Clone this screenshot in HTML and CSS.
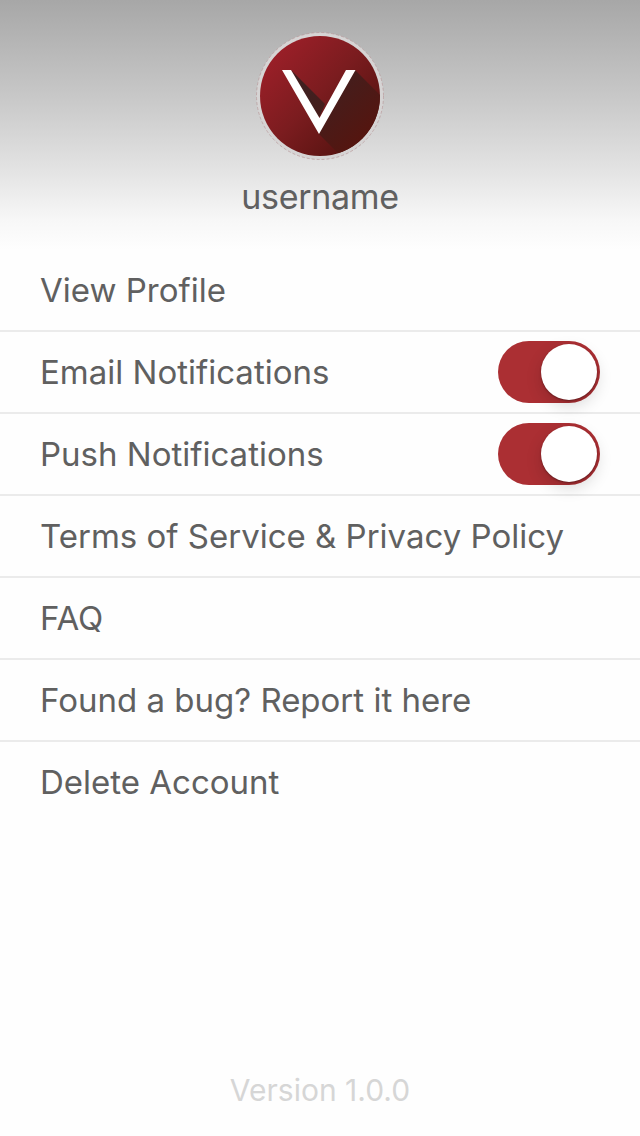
FILE: index.html
```html
<!DOCTYPE html>
<html lang="en">
<head>
<meta charset="utf-8">
<title>Settings</title>
<link rel="stylesheet" href="styles.css">
</head>
<body>
<main class="screen">
  <header class="profile">
    <svg class="avatar" viewBox="0 0 128 128" aria-hidden="true">
      <defs>
        <linearGradient id="disc" x1="0.1" y1="0.15" x2="0.85" y2="0.85">
          <stop offset="0" stop-color="#9b1f28"/>
          <stop offset="0.5" stop-color="#7b1c1f"/>
          <stop offset="1" stop-color="#561310"/>
        </linearGradient>
        <linearGradient id="fade" gradientUnits="userSpaceOnUse" x1="60" y1="55" x2="110" y2="105">
          <stop offset="0" stop-color="#402020"/>
          <stop offset="1" stop-color="#55150f"/>
        </linearGradient>
        <clipPath id="clip"><circle cx="64" cy="64" r="60"/></clipPath>
      </defs>
      <circle cx="64" cy="64" r="63.5" fill="#d6d4d4" stroke="#b99a9b" stroke-width="0.7" stroke-dasharray="3 2"/>
      <circle cx="64" cy="64" r="60" fill="url(#disc)"/>
      <g clip-path="url(#clip)" fill="url(#fade)">
        <path d="M35 38L69 72L63 86Z"/>
        <path d="M99 38L150 89V190L63 102Z"/>
      </g>
      <path d="M26 38H35L63.5 86L90 38H99.5L63 102Z" fill="#fff"/>
    </svg>
    <h1 class="username">username</h1>
  </header>
  <ul class="menu">
    <li class="row"><span class="view">View Profile</span></li>
    <li class="row"><span class="email">Email Notifications</span><span class="switch"><span class="knob"></span></span></li>
    <li class="row"><span class="push">Push Notifications</span><span class="switch"><span class="knob"></span></span></li>
    <li class="row"><span class="terms">Terms of Service &amp; Privacy Policy</span></li>
    <li class="row"><span class="faq">FAQ</span></li>
    <li class="row"><span class="bug">Found a bug? Report it here</span></li>
    <li class="row"><span class="delete">Delete Account</span></li>
  </ul>
  <footer class="version">Version 1.0.0</footer>
</main>
</body>
</html>
```
FILE: styles.css
```css
* { box-sizing: border-box; }
body { margin: 0; background: #fefefe; font-family: Inter, "Liberation Sans", sans-serif; color: #606060; }
.screen { width: 640px; height: 1136px; display: flex; flex-direction: column; }
.profile { height: 250px; padding-top: 32px; display: flex; flex-direction: column; align-items: center; background: linear-gradient(#a7a7a7, #c9c9c9 40%, #e3e3e3 68%, #f7f7f7 88%, #fefefe); }
.avatar { width: 128px; height: 128px; display: block; }
.username { margin: 17px 0 0; font-size: 34px; line-height: 40px; font-weight: 400; letter-spacing: -0.3px; }
.menu { margin: 0; padding: 0; list-style: none; font-size: 33px; line-height: 40px; }
.row { height: 82px; padding: 0 40px; display: flex; align-items: center; justify-content: space-between; border-bottom: 2px solid #ebebeb; white-space: nowrap; }
.row:last-child { border-bottom-color: transparent; }
.switch { width: 102px; height: 62px; padding: 3px; border-radius: 31px; background: #ab2f33; display: flex; justify-content: flex-end; }
.knob { width: 56px; height: 56px; border-radius: 50%; background: #fff; box-shadow: 0 1px 2px rgba(0,0,0,.35), 0 6px 16px rgba(0,0,0,.15); }
.version { margin: auto 0 26px; text-align: center; font-size: 30px; line-height: 40px; color: #d6d6d6; }
```
